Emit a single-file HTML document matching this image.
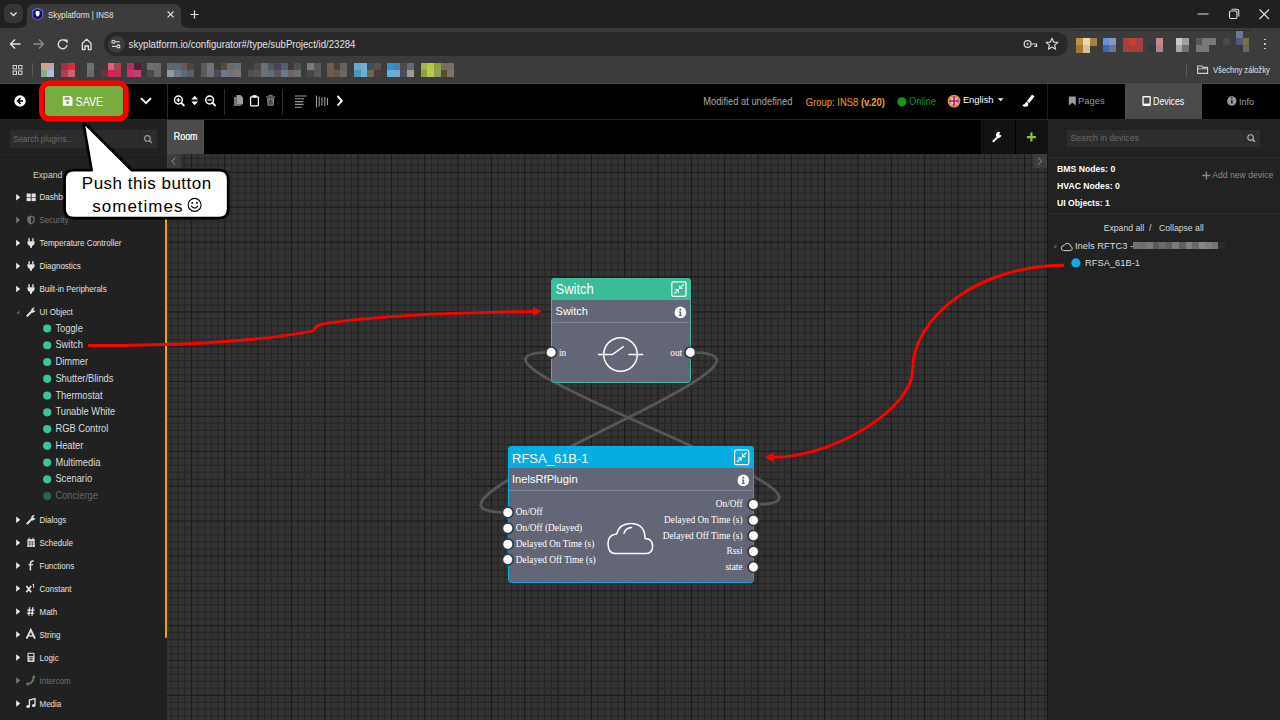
<!DOCTYPE html>
<html><head><meta charset="utf-8"><title>Skyplatform | INS8</title><style>
*{box-sizing:border-box;margin:0;padding:0}
html,body{width:1280px;height:720px;overflow:hidden;background:#000;font-family:"Liberation Sans",sans-serif}
.a{position:absolute}
.t{position:absolute;white-space:nowrap;line-height:1;transform-origin:0 0}
svg{position:absolute;left:0;top:0;overflow:visible}
</style></head><body>
<div class="a" style="left:0px;top:0px;width:1280px;height:28px;background:#202020"></div>
<div class="a" style="left:4px;top:4px;width:19px;height:19px;background:#353535;border-radius:6px"></div>
<svg width="1" height="1"><path d="M10.4 12.6 L13.5 15.5 L16.6 12.6" stroke="#e0e0e0" stroke-width="1.4" fill="none"/></svg>
<svg width="1" height="1"><path d="M19 28 Q27 28 27 20 V12 Q27 4 35 4 H173 Q181 4 181 12 V20 Q181 28 189 28 Z" fill="#3c3c3c"/></svg>
<svg width="1" height="1"><defs><linearGradient id="hg" x1="0" y1="0" x2="0" y2="1"><stop offset="0" stop-color="#3a7be0"/><stop offset="1" stop-color="#8a3ad0"/></linearGradient></defs><path d="M37.6 8.2 L42.6 11 L42.6 17.2 L37.6 20 L32.6 17.2 L32.6 11 Z" fill="#14143a" stroke="url(#hg)" stroke-width="1.3"/><path d="M35.6 11.6 L37.6 10.8 L39.6 11.6 L39.6 14 Q39.6 15.8 37.6 16.8 Q35.6 15.8 35.6 14 Z" fill="#f4f4ff"/></svg>
<div class="t" style="left:47.8px;top:10.83px;font-size:9.6px;color:#e3e3e3;font-weight:400;font-family:'Liberation Sans';transform:scale(0.82,0.931);">Skyplatform | INS8</div>
<svg width="1" height="1"><path d="M167.6 11.4 L173.6 17.4 M173.6 11.4 L167.6 17.4" stroke="#e6e6e6" stroke-width="1.15"/></svg>
<svg width="1" height="1"><path d="M194.5 10.5 V18.5 M190.5 14.5 H198.5" stroke="#e6e6e6" stroke-width="1.2"/></svg>
<svg width="1" height="1"><path d="M1197.5 14 H1208.5" stroke="#e0e0e0" stroke-width="1"/></svg>
<svg width="1" height="1"><rect x="1229.5" y="11" width="7.5" height="7.5" rx="1.5" fill="none" stroke="#e0e0e0" stroke-width="1.1"/><path d="M1231.6 9.2 H1236.6 Q1238.8 9.2 1238.8 11.4 V16.4" fill="none" stroke="#e0e0e0" stroke-width="1.1"/></svg>
<svg width="1" height="1"><path d="M1259.5 9.5 L1269 19 M1269 9.5 L1259.5 19" stroke="#e0e0e0" stroke-width="1.1"/></svg>
<div class="a" style="left:0px;top:28px;width:1280px;height:56px;background:#3c3c3c"></div>
<svg width="1" height="1"><path d="M20.5 44 H10.5 M15 39.5 L10.5 44 L15 48.5" stroke="#e3e3e3" stroke-width="1.4" fill="none"/></svg>
<svg width="1" height="1"><path d="M33.5 44 H43.5 M39 39.5 L43.5 44 L39 48.5" stroke="#8a8a8a" stroke-width="1.4" fill="none"/></svg>
<svg width="1" height="1"><path d="M67 45 A4.4 4.4 0 1 1 65.6 41" stroke="#e3e3e3" stroke-width="1.4" fill="none"/><path d="M63.6 39.4 L67.6 39.4 L67.6 43.4 Z" fill="#e3e3e3"/></svg>
<svg width="1" height="1"><path d="M82.4 49.6 V43.2 L86.7 39.2 L91 43.2 V49.6 H88.4 V46 H85 V49.6 Z" stroke="#e3e3e3" stroke-width="1.3" fill="none" stroke-linejoin="round"/></svg>
<div class="a" style="left:104px;top:32px;width:964px;height:24px;background:#282828;border-radius:12px"></div>
<div class="a" style="left:107.5px;top:35.5px;width:17px;height:17px;background:#3c3c3c;border-radius:50%"></div>
<svg width="1" height="1"><circle cx="113.4" cy="41.8" r="1.5" fill="none" stroke="#e3e3e3" stroke-width="1.1"/><path d="M115.2 41.8 H119.6" stroke="#e3e3e3" stroke-width="1.1"/><circle cx="118.4" cy="46.4" r="1.5" fill="none" stroke="#e3e3e3" stroke-width="1.1"/><path d="M112 46.4 H116.6" stroke="#e3e3e3" stroke-width="1.1"/></svg>
<div class="t" style="left:128.6px;top:38.53px;font-size:9.63px;color:#e3e3e3;font-weight:400;font-family:'Liberation Sans';transform:scale(1,1.088);">skyplatform.io/configurator#/type/subProject/id/23284</div>
<svg width="1" height="1"><circle cx="1027.6" cy="44" r="3.4" fill="none" stroke="#d8d8d8" stroke-width="1.2"/><circle cx="1027.6" cy="44" r="1" fill="#d8d8d8"/><path d="M1031 44 H1036.6 V46.4 H1034.2" stroke="#d8d8d8" stroke-width="1.2" fill="none"/></svg>
<svg width="1" height="1"><path d="M1052 38.2 L1053.7 42.2 L1057.8 42.4 L1054.6 45.1 L1055.6 49.2 L1052 47 L1048.4 49.2 L1049.4 45.1 L1046.2 42.4 L1050.3 42.2 Z" fill="none" stroke="#d8d8d8" stroke-width="1.2" stroke-linejoin="round"/></svg>
<div class="a" style="left:1076px;top:38px;width:7.1px;height:7.5px;background:#c09040"></div>
<div class="a" style="left:1082.8px;top:38px;width:7.1px;height:7.5px;background:#f0d8a8"></div>
<div class="a" style="left:1089.6px;top:38px;width:7.1px;height:7.5px;background:#a88040"></div>
<div class="a" style="left:1076px;top:45.2px;width:7.1px;height:7.5px;background:#a07838"></div>
<div class="a" style="left:1082.8px;top:45.2px;width:7.1px;height:7.5px;background:#d8c098"></div>
<div class="a" style="left:1073px;top:30.2px;width:179px;height:1px;background:#2e2e2e"></div>
<div class="a" style="left:1102.6px;top:38.1px;width:7px;height:7.3px;background:#6a90e0"></div>
<div class="a" style="left:1109.3px;top:38.1px;width:7px;height:7.3px;background:#8898b8"></div>
<div class="a" style="left:1102.6px;top:45.1px;width:7px;height:7.3px;background:#4068a8"></div>
<div class="a" style="left:1109.3px;top:45.1px;width:7px;height:7.3px;background:#687890"></div>
<div class="a" style="left:1122.7px;top:38.1px;width:6.97px;height:7.3px;background:#a84038"></div>
<div class="a" style="left:1129.37px;top:38.1px;width:6.97px;height:7.3px;background:#c84030"></div>
<div class="a" style="left:1136.04px;top:38.1px;width:6.97px;height:7.3px;background:#a84040"></div>
<div class="a" style="left:1122.7px;top:45.1px;width:6.97px;height:7.3px;background:#a04038"></div>
<div class="a" style="left:1129.37px;top:45.1px;width:6.97px;height:7.3px;background:#a84038"></div>
<div class="a" style="left:1136.04px;top:45.1px;width:6.97px;height:7.3px;background:#a04040"></div>
<div class="a" style="left:1149.4px;top:38.1px;width:6.95px;height:7.3px;background:#3a3a48"></div>
<div class="a" style="left:1156.05px;top:38.1px;width:6.95px;height:7.3px;background:#c88888"></div>
<div class="a" style="left:1149.4px;top:45.1px;width:6.95px;height:7.3px;background:#303848"></div>
<div class="a" style="left:1156.05px;top:45.1px;width:6.95px;height:7.3px;background:#a88888"></div>
<div class="a" style="left:1175.8px;top:38.1px;width:6.9px;height:7.3px;background:#c8c8c8"></div>
<div class="a" style="left:1182.4px;top:38.1px;width:6.9px;height:7.3px;background:#a0a0a0"></div>
<div class="a" style="left:1175.8px;top:45.1px;width:6.9px;height:7.3px;background:#a8a8a8"></div>
<div class="a" style="left:1182.4px;top:45.1px;width:6.9px;height:7.3px;background:#707070"></div>
<div class="a" style="left:1195.8px;top:38.1px;width:6.97px;height:7.3px;background:#585858"></div>
<div class="a" style="left:1202.47px;top:38.1px;width:6.97px;height:7.3px;background:#787878"></div>
<div class="a" style="left:1209.14px;top:38.1px;width:6.97px;height:7.3px;background:#787878"></div>
<div class="a" style="left:1195.8px;top:45.1px;width:6.97px;height:7.3px;background:#787878"></div>
<div class="a" style="left:1202.47px;top:45.1px;width:6.97px;height:7.3px;background:#787878"></div>
<div class="a" style="left:1222.5px;top:38.1px;width:7px;height:7.3px;background:#484848"></div>
<div class="a" style="left:1235.9px;top:31.2px;width:6.95px;height:7.23px;background:#6a7890"></div>
<div class="a" style="left:1235.9px;top:38.13px;width:6.95px;height:7.23px;background:#505a78"></div>
<div class="a" style="left:1242.55px;top:38.13px;width:6.95px;height:7.23px;background:#7a7048"></div>
<div class="a" style="left:1235.9px;top:45.06px;width:6.95px;height:7.23px;background:#3a3840"></div>
<div class="a" style="left:1242.55px;top:45.06px;width:6.95px;height:7.23px;background:#706458"></div>
<div class="a" style="left:1263.8px;top:38.6px;width:1.8px;height:1.8px;background:#e3e3e3;border-radius:50%"></div>
<div class="a" style="left:1263.8px;top:43.1px;width:1.8px;height:1.8px;background:#e3e3e3;border-radius:50%"></div>
<div class="a" style="left:1263.8px;top:47.6px;width:1.8px;height:1.8px;background:#e3e3e3;border-radius:50%"></div>
<svg width="1" height="1"><g fill="none" stroke="#d8d8d8" stroke-width="1"><rect x="13.1" y="65.5" width="3.4" height="3.4"/><rect x="18.6" y="65.5" width="3.4" height="3.4"/><rect x="13.1" y="71" width="3.4" height="3.4"/><rect x="18.6" y="71" width="3.4" height="3.4"/></g></svg>
<div class="a" style="left:32.3px;top:63px;width:1px;height:14px;background:#5a5a5a"></div>
<div class="a" style="left:40.6px;top:63px;width:7px;height:7.3px;background:#c8a882"></div>
<div class="a" style="left:47.3px;top:63px;width:7px;height:7.3px;background:#c8a0b0"></div>
<div class="a" style="left:40.6px;top:70px;width:7px;height:7.3px;background:#90a890"></div>
<div class="a" style="left:47.3px;top:70px;width:7px;height:7.3px;background:#a8c0d8"></div>
<div class="a" style="left:60.6px;top:63px;width:7.3px;height:7.3px;background:#a03040"></div>
<div class="a" style="left:67.6px;top:63px;width:7.3px;height:7.3px;background:#d03040"></div>
<div class="a" style="left:74.6px;top:63px;width:7.3px;height:7.3px;background:#503038"></div>
<div class="a" style="left:60.6px;top:70px;width:7.3px;height:7.3px;background:#b04050"></div>
<div class="a" style="left:67.6px;top:70px;width:7.3px;height:7.3px;background:#d06070"></div>
<div class="a" style="left:87px;top:63px;width:7.3px;height:7.3px;background:#707070"></div>
<div class="a" style="left:87px;top:70px;width:7.3px;height:7.3px;background:#6a6a6a"></div>
<div class="a" style="left:101px;top:63px;width:7px;height:7.3px;background:#553038"></div>
<div class="a" style="left:107.7px;top:63px;width:7px;height:7.3px;background:#e06080"></div>
<div class="a" style="left:114.4px;top:63px;width:7px;height:7.3px;background:#b04050"></div>
<div class="a" style="left:101px;top:70px;width:7px;height:7.3px;background:#603840"></div>
<div class="a" style="left:107.7px;top:70px;width:7px;height:7.3px;background:#d02850"></div>
<div class="a" style="left:114.4px;top:70px;width:7px;height:7.3px;background:#c03050"></div>
<div class="a" style="left:127px;top:63px;width:7.3px;height:7.3px;background:#b03060"></div>
<div class="a" style="left:134px;top:63px;width:7.3px;height:7.3px;background:#502030"></div>
<div class="a" style="left:127px;top:70px;width:7.3px;height:7.3px;background:#d03070"></div>
<div class="a" style="left:134px;top:70px;width:7.3px;height:7.3px;background:#c04070"></div>
<div class="a" style="left:147px;top:63px;width:7.3px;height:7.3px;background:#707070"></div>
<div class="a" style="left:154px;top:63px;width:7.3px;height:7.3px;background:#6a6a6a"></div>
<div class="a" style="left:147px;top:70px;width:7.3px;height:7.3px;background:#4a4a4a"></div>
<div class="a" style="left:154px;top:70px;width:7.3px;height:7.3px;background:#686868"></div>
<div class="a" style="left:167px;top:63px;width:7.1px;height:7.3px;background:#6a625e"></div>
<div class="a" style="left:173.8px;top:63px;width:7.1px;height:7.3px;background:#586878"></div>
<div class="a" style="left:180.6px;top:63px;width:7.1px;height:7.3px;background:#6a5a52"></div>
<div class="a" style="left:187.4px;top:63px;width:7.1px;height:7.3px;background:#4a443e"></div>
<div class="a" style="left:167px;top:70px;width:7.1px;height:7.3px;background:#909aa0"></div>
<div class="a" style="left:173.8px;top:70px;width:7.1px;height:7.3px;background:#6a7a84"></div>
<div class="a" style="left:180.6px;top:70px;width:7.1px;height:7.3px;background:#5e6a74"></div>
<div class="a" style="left:187.4px;top:70px;width:7.1px;height:7.3px;background:#585e6a"></div>
<div class="a" style="left:200.6px;top:63px;width:7px;height:7.3px;background:#5a5a5a"></div>
<div class="a" style="left:207.3px;top:63px;width:7px;height:7.3px;background:#727272"></div>
<div class="a" style="left:220.7px;top:63px;width:7px;height:7.3px;background:#5a4a3a"></div>
<div class="a" style="left:227.4px;top:63px;width:7px;height:7.3px;background:#6a6a6a"></div>
<div class="a" style="left:234.1px;top:63px;width:7px;height:7.3px;background:#6a7074"></div>
<div class="a" style="left:200.6px;top:70px;width:7px;height:7.3px;background:#5a5a5a"></div>
<div class="a" style="left:207.3px;top:70px;width:7px;height:7.3px;background:#727272"></div>
<div class="a" style="left:214px;top:70px;width:7px;height:7.3px;background:#484c58"></div>
<div class="a" style="left:220.7px;top:70px;width:7px;height:7.3px;background:#6a7a88"></div>
<div class="a" style="left:227.4px;top:70px;width:7px;height:7.3px;background:#74707a"></div>
<div class="a" style="left:234.1px;top:70px;width:7px;height:7.3px;background:#7a7474"></div>
<div class="a" style="left:254.2px;top:63px;width:7px;height:7.3px;background:#4a4a4a"></div>
<div class="a" style="left:260.9px;top:63px;width:7px;height:7.3px;background:#707070"></div>
<div class="a" style="left:267.6px;top:63px;width:7px;height:7.3px;background:#585450"></div>
<div class="a" style="left:274.3px;top:63px;width:7px;height:7.3px;background:#4a4460"></div>
<div class="a" style="left:281px;top:63px;width:7px;height:7.3px;background:#4e6070"></div>
<div class="a" style="left:294.4px;top:63px;width:7px;height:7.3px;background:#505050"></div>
<div class="a" style="left:247.5px;top:70px;width:7px;height:7.3px;background:#505050"></div>
<div class="a" style="left:254.2px;top:70px;width:7px;height:7.3px;background:#555555"></div>
<div class="a" style="left:260.9px;top:70px;width:7px;height:7.3px;background:#707070"></div>
<div class="a" style="left:267.6px;top:70px;width:7px;height:7.3px;background:#5a6e80"></div>
<div class="a" style="left:274.3px;top:70px;width:7px;height:7.3px;background:#605458"></div>
<div class="a" style="left:281px;top:70px;width:7px;height:7.3px;background:#6a7a88"></div>
<div class="a" style="left:287.7px;top:70px;width:7px;height:7.3px;background:#6e6660"></div>
<div class="a" style="left:294.4px;top:70px;width:7px;height:7.3px;background:#687070"></div>
<div class="a" style="left:307px;top:63px;width:7.1px;height:7.3px;background:#7a7a7a"></div>
<div class="a" style="left:313.8px;top:63px;width:7.1px;height:7.3px;background:#5a5a5a"></div>
<div class="a" style="left:307px;top:70px;width:7.1px;height:7.3px;background:#484848"></div>
<div class="a" style="left:313.8px;top:70px;width:7.1px;height:7.3px;background:#5a5a5a"></div>
<div class="a" style="left:327px;top:63px;width:7px;height:7.3px;background:#6e5c48"></div>
<div class="a" style="left:333.7px;top:63px;width:7px;height:7.3px;background:#4e4038"></div>
<div class="a" style="left:340.4px;top:63px;width:7px;height:7.3px;background:#6a6060"></div>
<div class="a" style="left:327px;top:70px;width:7px;height:7.3px;background:#705a48"></div>
<div class="a" style="left:333.7px;top:70px;width:7px;height:7.3px;background:#5e5a48"></div>
<div class="a" style="left:340.4px;top:70px;width:7px;height:7.3px;background:#6e6464"></div>
<div class="a" style="left:354px;top:63px;width:7px;height:7.3px;background:#68a8c8"></div>
<div class="a" style="left:360.7px;top:63px;width:7px;height:7.3px;background:#70b0d0"></div>
<div class="a" style="left:367.4px;top:63px;width:7px;height:7.3px;background:#3a5060"></div>
<div class="a" style="left:374.1px;top:63px;width:7px;height:7.3px;background:#5a5048"></div>
<div class="a" style="left:354px;top:70px;width:7px;height:7.3px;background:#4898b8"></div>
<div class="a" style="left:360.7px;top:70px;width:7px;height:7.3px;background:#68b0d0"></div>
<div class="a" style="left:367.4px;top:70px;width:7px;height:7.3px;background:#686850"></div>
<div class="a" style="left:374.1px;top:70px;width:7px;height:7.3px;background:#4a3a38"></div>
<div class="a" style="left:387px;top:63px;width:7px;height:7.3px;background:#2898c8"></div>
<div class="a" style="left:393.7px;top:63px;width:7px;height:7.3px;background:#3888b0"></div>
<div class="a" style="left:400.4px;top:63px;width:7px;height:7.3px;background:#504844"></div>
<div class="a" style="left:407.1px;top:63px;width:7px;height:7.3px;background:#606a70"></div>
<div class="a" style="left:387px;top:70px;width:7px;height:7.3px;background:#60b0d8"></div>
<div class="a" style="left:393.7px;top:70px;width:7px;height:7.3px;background:#78a8c8"></div>
<div class="a" style="left:400.4px;top:70px;width:7px;height:7.3px;background:#485060"></div>
<div class="a" style="left:407.1px;top:70px;width:7px;height:7.3px;background:#a09a90"></div>
<div class="a" style="left:420.5px;top:63px;width:7px;height:7.3px;background:#a8b048"></div>
<div class="a" style="left:427.2px;top:63px;width:7px;height:7.3px;background:#b8c848"></div>
<div class="a" style="left:433.9px;top:63px;width:7px;height:7.3px;background:#90a040"></div>
<div class="a" style="left:440.6px;top:63px;width:7px;height:7.3px;background:#7a6e60"></div>
<div class="a" style="left:447.3px;top:63px;width:7px;height:7.3px;background:#7a6e60"></div>
<div class="a" style="left:420.5px;top:70px;width:7px;height:7.3px;background:#90a040"></div>
<div class="a" style="left:427.2px;top:70px;width:7px;height:7.3px;background:#b8c848"></div>
<div class="a" style="left:433.9px;top:70px;width:7px;height:7.3px;background:#90a060"></div>
<div class="a" style="left:440.6px;top:70px;width:7px;height:7.3px;background:#5a4a38"></div>
<div class="a" style="left:447.3px;top:70px;width:7px;height:7.3px;background:#807468"></div>
<div class="a" style="left:1186px;top:63px;width:1px;height:14px;background:#5a5a5a"></div>
<svg width="1" height="1"><path d="M1197.6 66 H1201.6 L1203 67.4 H1207.6 V73.4 H1197.6 Z" fill="none" stroke="#d0d0d0" stroke-width="1.1" stroke-linejoin="round"/><path d="M1197.6 68.8 H1207.6" stroke="#d0d0d0" stroke-width="0.9"/></svg>
<div class="t" style="left:1213.2px;top:64.82px;font-size:8.4px;color:#e3e3e3;font-weight:400;font-family:'Liberation Sans';transform:scale(0.91,1.164);">Všechny záložky</div>
<div class="a" style="left:0px;top:83px;width:1280px;height:1px;background:#474747"></div>
<div class="a" style="left:0px;top:84px;width:1280px;height:35px;background:#000"></div>
<div class="a" style="left:0px;top:119px;width:1280px;height:1px;background:#262626"></div>
<svg width="1" height="1"><circle cx="20" cy="101" r="5.7" fill="#fff"/><path d="M20.6 98 L17.6 101 L20.6 104 M17.8 101 H23" stroke="#000" stroke-width="1.7" fill="none"/></svg>
<div class="a" style="left:45px;top:86px;width:78px;height:30px;background:#79ac3f;border-radius:3px"></div>
<svg width="1" height="1"><path d="M62.8 96.1 H70.4 L72.5 98.2 V105.8 H62.8 Z" fill="#fff"/><rect x="64.6" y="97.2" width="5" height="2.6" fill="#79ac3f"/><circle cx="67.6" cy="102.6" r="1.5" fill="#79ac3f"/></svg>
<div class="t" style="left:75.6px;top:95.9px;font-size:10.67px;color:#fff;font-weight:400;font-family:'Liberation Sans';transform:scale(1,1.152);">SAVE</div>
<svg width="1" height="1"><path d="M141 98.2 L146 103.2 L151 98.2" stroke="#fff" stroke-width="1.9" fill="none"/></svg>
<div class="a" style="left:167px;top:84px;width:1px;height:35px;background:#2a2a2a"></div>
<svg width="1" height="1"><circle cx="178.4" cy="100" r="3.9" fill="#000" stroke="#fff" stroke-width="1.5"/><path d="M176.4 100 H180.4" stroke="#fff" stroke-width="1.2"/><path d="M178.4 98 V102" stroke="#fff" stroke-width="1.2"/><path d="M181.3 102.9 L183.8 105.4" stroke="#fff" stroke-width="2" stroke-linecap="round"/></svg>
<svg width="1" height="1"><path d="M191.3 99.4 L194.7 95.8 L198.1 99.4 Z M191.3 101.6 L194.7 105.2 L198.1 101.6 Z" fill="#fff"/></svg>
<svg width="1" height="1"><circle cx="209.6" cy="100" r="3.9" fill="#000" stroke="#fff" stroke-width="1.5"/><path d="M207.6 100 H211.6" stroke="#fff" stroke-width="1.2"/><path d="M212.5 102.9 L215.0 105.4" stroke="#fff" stroke-width="2" stroke-linecap="round"/></svg>
<div class="a" style="left:223.5px;top:89px;width:1px;height:26px;background:#2e2e2e"></div>
<svg width="1" height="1"><path d="M234 97 H236.5 V104.5 H241 V106 H234 Z" fill="#777"/><path d="M236.5 95 H240.5 L243 97.5 V104.5 H236.5 Z" fill="#9a9a9a"/></svg>
<svg width="1" height="1"><rect x="250.6" y="96.8" width="7.8" height="9" rx="0.8" fill="none" stroke="#fff" stroke-width="1.3"/><rect x="252.5" y="95.2" width="4" height="2.4" fill="#fff"/></svg>
<svg width="1" height="1"><path d="M266 97 H275.2" stroke="#888" stroke-width="1.2"/><path d="M269 96.6 V95.3 H272.2 V96.6" stroke="#888" stroke-width="1" fill="none"/><path d="M267 98.2 H274.2 L273.6 105.8 H267.6 Z" fill="#888"/><path d="M269.2 99.5 V104.8 M270.6 99.5 V104.8 M272 99.5 V104.8" stroke="#000" stroke-width="0.6"/></svg>
<div class="a" style="left:282px;top:89px;width:1px;height:26px;background:#2e2e2e"></div>
<svg width="1" height="1"><path d="M295 96 H306.5 M295 98.8 H304 M295 101.6 H303 M295 104.4 H303.5 M295 107.2 H302" stroke="#9a9a9a" stroke-width="1.1"/></svg>
<svg width="1" height="1"><path d="M316.5 95.5 V107.5 M319.2 96.5 V106.5 M322 97.5 V105.5 M324.8 97 V106 M327.5 98 V105" stroke="#9a9a9a" stroke-width="1.1"/></svg>
<svg width="1" height="1"><path d="M337.5 96 L341.8 100.8 L337.5 105.6" stroke="#fff" stroke-width="1.9" fill="none"/></svg>
<div class="t" style="left:703.2px;top:97.3px;font-size:9.33px;color:#a9a9a9;font-weight:400;font-family:'Liberation Sans';transform:scale(1,1.153);">Modified at undefined</div>
<div class="t" style="left:805.8px;top:97.1px;font-size:9.45px;color:#f0a020;font-weight:400;font-family:'Liberation Sans';transform:scale(1,1.138);">Group: INS8 <b>(v.20)</b></div>
<svg width="1" height="1"><circle cx="901.9" cy="101.8" r="4.6" fill="#169616"/></svg>
<div class="t" style="left:909px;top:97.3px;font-size:9.33px;color:#1a8f1a;font-weight:400;font-family:'Liberation Sans';transform:scale(1,1.153);">Online</div>
<svg width="1" height="1"><defs><clipPath id="fc"><circle cx="954" cy="101.1" r="5.6"/></clipPath></defs><g clip-path="url(#fc)"><rect x="947" y="94" width="15" height="15" fill="#3a7ad2"/><path d="M947 94 L961 108.2 M961 94 L947 108.2" stroke="#f4f4f4" stroke-width="1.5"/><path d="M947 94 L961 108.2 M961 94 L947 108.2" stroke="#e03048" stroke-width="0.5"/><path d="M954 94 V109 M947 101.1 H962" stroke="#f4f4f4" stroke-width="2.7"/><path d="M954 94 V109 M947 101.1 H962" stroke="#e8153a" stroke-width="1.8"/></g><circle cx="954" cy="101.1" r="5.8" fill="none" stroke="#e89a20" stroke-width="1.2"/></svg>
<div class="t" style="left:962.9px;top:95.52px;font-size:9.33px;color:#fff;font-weight:400;font-family:'Liberation Sans';transform:scale(1,1.048);">English</div>
<svg width="1" height="1"><path d="M997.9 98.2 H1003.5 L1000.7 101.2 Z" fill="#fff"/></svg>
<svg width="1" height="1"><path d="M1031.4 95.2 Q1033 94.6 1034.4 96.4 L1029.4 103 L1026.8 101.4 Z" fill="#fff"/><path d="M1026.8 102 Q1028.9 103 1028.3 105.4 Q1027 107.2 1023.6 106.6 Q1022.4 106 1022.6 104.6 Q1024.5 104.8 1025 103.6 Q1025.5 101.8 1026.8 102 Z" fill="#fff"/></svg>
<div class="a" style="left:1047px;top:84px;width:1px;height:35px;background:#1c1c1c"></div>
<div class="a" style="left:1124.5px;top:84px;width:77px;height:35px;background:#4a4a4a"></div>
<svg width="1" height="1"><path d="M1068.8 96.6 H1075.8 V105.5 L1072.3 102.8 L1068.8 105.5 Z" fill="#9a9a9a"/></svg>
<div class="t" style="left:1078.1px;top:97.22px;font-size:9.33px;color:#9a9a9a;font-weight:400;font-family:'Liberation Sans';transform:scale(1,1.048);">Pages</div>
<svg width="1" height="1"><rect x="1142.4" y="96.1" width="8.4" height="9.8" rx="1.2" fill="#fff"/><rect x="1143.7" y="97.4" width="5.8" height="6.2" fill="#4a4a4a"/></svg>
<div class="t" style="left:1153.1px;top:96.85px;font-size:8.75px;color:#fff;font-weight:400;font-family:'Liberation Sans';transform:scale(1,1.181);">Devices</div>
<svg width="1" height="1"><circle cx="1231.8" cy="101" r="4.7" fill="#9a9a9a"/><rect x="1231.2" y="100" width="1.3" height="3.6" fill="#000"/><circle cx="1231.85" cy="98.3" r="0.8" fill="#000"/></svg>
<div class="t" style="left:1238.9px;top:96.92px;font-size:9.0px;color:#9a9a9a;font-weight:400;font-family:'Liberation Sans';transform:scale(1,1.086);">Info</div>
<div class="a" style="left:0px;top:120px;width:167px;height:600px;background:#212121"></div>
<div class="a" style="left:10px;top:130.4px;width:147px;height:17.5px;background:#2c2c2c"></div>
<div class="a" style="left:139px;top:130.4px;width:1px;height:17.5px;background:#252525"></div>
<svg width="1" height="1"><circle cx="147.4" cy="138.4" r="2.8" fill="none" stroke="#9a9a9a" stroke-width="1.1"/><path d="M149.4 140.4 L151.4 142.4" stroke="#9a9a9a" stroke-width="1.4" stroke-linecap="round"/></svg>
<div class="t" style="left:13.3px;top:134.83px;font-size:8px;color:#6a6a6a;font-weight:400;font-family:'Liberation Sans';transform:scale(1,1.117);">Search plugins...</div>
<div class="a" style="left:0px;top:157.4px;width:167px;height:1px;background:#1a1a1a"></div>
<div class="t" style="left:33px;top:170.36px;font-size:8.67px;color:#d0d0d0;font-weight:400;font-family:'Liberation Sans';transform:scale(1,1.095);">Expand all</div>
<div class="t" style="left:78.3px;top:170.36px;font-size:8.67px;color:#d0d0d0;font-weight:400;font-family:'Liberation Sans';transform:scale(1,1.095);">/</div>
<div class="t" style="left:88.3px;top:170.36px;font-size:8.67px;color:#d0d0d0;font-weight:400;font-family:'Liberation Sans';transform:scale(1,1.095);">Collapse all</div>
<svg width="1" height="1"><path d="M16.2 193.89999999999998 L20.2 197.2 L16.2 200.5 Z" fill="#f0f0f0"/></svg>
<svg width="1" height="1"><rect x="26.6" y="193.5" width="4.1" height="3.5" fill="#e2e2e2"/><rect x="31.6" y="193.5" width="4.1" height="3.5" fill="#e2e2e2"/><rect x="26.6" y="197.6" width="4.1" height="3.5" fill="#e2e2e2"/><rect x="31.6" y="197.6" width="4.1" height="3.5" fill="#e2e2e2"/></svg>
<div class="t" style="left:39.5px;top:193.34px;font-size:8px;color:#e2e2e2;font-weight:400;font-family:'Liberation Sans';transform:scale(1,1.205);">Dashboard</div>
<svg width="1" height="1"><path d="M16.2 216.7 L20.2 220.0 L16.2 223.3 Z" fill="#777"/></svg>
<svg width="1" height="1"><path d="M31 215.6 L34.8 217.0 V220.0 Q34.6 223.2 31 224.6 Q27.4 223.2 27.2 220.0 V217.0 Z" fill="#6e6e6e"/><path d="M31 217.0 V223.4 Q33.4 222.2 33.5 219.8 V217.9 Z" fill="#212121"/></svg>
<div class="t" style="left:39.5px;top:216.14px;font-size:8px;color:#727272;font-weight:400;font-family:'Liberation Sans';transform:scale(1,1.205);">Security</div>
<svg width="1" height="1"><path d="M16.2 239.7 L20.2 243.0 L16.2 246.3 Z" fill="#f0f0f0"/></svg>
<svg width="1" height="1"><rect x="28.4" y="238.2" width="1.4" height="3.2" fill="#e2e2e2"/><rect x="32.2" y="238.2" width="1.4" height="3.2" fill="#e2e2e2"/><path d="M27.4 241.2 H34.6 V243.0 Q34.3 245.6 32 245.9 V247.8 H30 V245.9 Q27.7 245.6 27.4 243.0 Z" fill="#e2e2e2"/></svg>
<div class="t" style="left:39.5px;top:239.14px;font-size:8px;color:#e2e2e2;font-weight:400;font-family:'Liberation Sans';transform:scale(1,1.205);">Temperature Controller</div>
<svg width="1" height="1"><path d="M16.2 262.7 L20.2 266.0 L16.2 269.3 Z" fill="#f0f0f0"/></svg>
<svg width="1" height="1"><rect x="28.4" y="261.2" width="1.4" height="3.2" fill="#e2e2e2"/><rect x="32.2" y="261.2" width="1.4" height="3.2" fill="#e2e2e2"/><path d="M27.4 264.2 H34.6 V266.0 Q34.3 268.6 32 268.9 V270.8 H30 V268.9 Q27.7 268.6 27.4 266.0 Z" fill="#e2e2e2"/></svg>
<div class="t" style="left:39.5px;top:262.14px;font-size:8px;color:#e2e2e2;font-weight:400;font-family:'Liberation Sans';transform:scale(1,1.205);">Diagnostics</div>
<svg width="1" height="1"><path d="M16.2 285.7 L20.2 289.0 L16.2 292.3 Z" fill="#f0f0f0"/></svg>
<svg width="1" height="1"><rect x="28.4" y="284.2" width="1.4" height="3.2" fill="#e2e2e2"/><rect x="32.2" y="284.2" width="1.4" height="3.2" fill="#e2e2e2"/><path d="M27.4 287.2 H34.6 V289.0 Q34.3 291.6 32 291.9 V293.8 H30 V291.9 Q27.7 291.6 27.4 289.0 Z" fill="#e2e2e2"/></svg>
<div class="t" style="left:39.5px;top:285.14px;font-size:8px;color:#e2e2e2;font-weight:400;font-family:'Liberation Sans';transform:scale(1,1.205);">Built-in Peripherals</div>
<svg width="1" height="1"><path d="M19.4 310.6 L19.4 313.8 L16.2 313.8 Z" fill="#666"/></svg>
<svg width="1" height="1"><path d="M27.4 315.8 L31.6 311.4" stroke="#e2e2e2" stroke-width="2.1" stroke-linecap="round"/><path d="M31.2 310.8 A2.9 2.9 0 0 1 34.8 307.5 L33.2 309.4 L33.8 310.8 L35.4 310.4 A2.9 2.9 0 0 1 31.6 312.6 Z" fill="#e2e2e2"/></svg>
<div class="t" style="left:39.5px;top:308.14px;font-size:8px;color:#e2e2e2;font-weight:400;font-family:'Liberation Sans';transform:scale(1,1.205);">UI Object</div>
<svg width="1" height="1"><circle cx="47.2" cy="328.50" r="4.1" fill="#3dc29b"/></svg>
<div class="t" style="left:55.4px;top:323.62px;font-size:9.33px;color:#dcdcdc;font-weight:400;font-family:'Liberation Sans';transform:scale(1,1.093);">Toggle</div>
<svg width="1" height="1"><circle cx="47.2" cy="345.26" r="4.1" fill="#3dc29b"/></svg>
<div class="t" style="left:55.4px;top:340.38px;font-size:9.33px;color:#dcdcdc;font-weight:400;font-family:'Liberation Sans';transform:scale(1,1.093);">Switch</div>
<svg width="1" height="1"><circle cx="47.2" cy="362.02" r="4.1" fill="#3dc29b"/></svg>
<div class="t" style="left:55.4px;top:357.14px;font-size:9.33px;color:#dcdcdc;font-weight:400;font-family:'Liberation Sans';transform:scale(1,1.093);">Dimmer</div>
<svg width="1" height="1"><circle cx="47.2" cy="378.78" r="4.1" fill="#3dc29b"/></svg>
<div class="t" style="left:55.4px;top:373.9px;font-size:9.33px;color:#dcdcdc;font-weight:400;font-family:'Liberation Sans';transform:scale(1,1.093);">Shutter/Blinds</div>
<svg width="1" height="1"><circle cx="47.2" cy="395.54" r="4.1" fill="#3dc29b"/></svg>
<div class="t" style="left:55.4px;top:390.66px;font-size:9.33px;color:#dcdcdc;font-weight:400;font-family:'Liberation Sans';transform:scale(1,1.093);">Thermostat</div>
<svg width="1" height="1"><circle cx="47.2" cy="412.30" r="4.1" fill="#3dc29b"/></svg>
<div class="t" style="left:55.4px;top:407.42px;font-size:9.33px;color:#dcdcdc;font-weight:400;font-family:'Liberation Sans';transform:scale(1,1.093);">Tunable White</div>
<svg width="1" height="1"><circle cx="47.2" cy="429.06" r="4.1" fill="#3dc29b"/></svg>
<div class="t" style="left:55.4px;top:424.18px;font-size:9.33px;color:#dcdcdc;font-weight:400;font-family:'Liberation Sans';transform:scale(1,1.093);">RGB Control</div>
<svg width="1" height="1"><circle cx="47.2" cy="445.82" r="4.1" fill="#3dc29b"/></svg>
<div class="t" style="left:55.4px;top:440.94px;font-size:9.33px;color:#dcdcdc;font-weight:400;font-family:'Liberation Sans';transform:scale(1,1.093);">Heater</div>
<svg width="1" height="1"><circle cx="47.2" cy="462.58" r="4.1" fill="#3dc29b"/></svg>
<div class="t" style="left:55.4px;top:457.7px;font-size:9.33px;color:#dcdcdc;font-weight:400;font-family:'Liberation Sans';transform:scale(1,1.093);">Multimedia</div>
<svg width="1" height="1"><circle cx="47.2" cy="479.34" r="4.1" fill="#3dc29b"/></svg>
<div class="t" style="left:55.4px;top:474.46px;font-size:9.33px;color:#dcdcdc;font-weight:400;font-family:'Liberation Sans';transform:scale(1,1.093);">Scenario</div>
<svg width="1" height="1"><circle cx="47.2" cy="496.10" r="4.1" fill="#2d6354"/></svg>
<div class="t" style="left:55.4px;top:491.22px;font-size:9.33px;color:#676767;font-weight:400;font-family:'Liberation Sans';transform:scale(1,1.093);">Concierge</div>
<svg width="1" height="1"><path d="M16.2 516.4000000000001 L20.2 519.7 L16.2 523.0 Z" fill="#f0f0f0"/></svg>
<svg width="1" height="1"><path d="M27.4 523.5 L31.6 519.1" stroke="#e2e2e2" stroke-width="2.1" stroke-linecap="round"/><path d="M31.2 518.5 A2.9 2.9 0 0 1 34.8 515.2 L33.2 517.1 L33.8 518.5 L35.4 518.1 A2.9 2.9 0 0 1 31.6 520.3000000000001 Z" fill="#e2e2e2"/></svg>
<div class="t" style="left:39.5px;top:515.84px;font-size:8px;color:#e2e2e2;font-weight:400;font-family:'Liberation Sans';transform:scale(1,1.205);">Dialogs</div>
<svg width="1" height="1"><path d="M16.2 539.4000000000001 L20.2 542.7 L16.2 546.0 Z" fill="#f0f0f0"/></svg>
<svg width="1" height="1"><rect x="27.3" y="539.3000000000001" width="7.6" height="7.8" rx="0.6" fill="#e2e2e2"/><rect x="28.6" y="537.8000000000001" width="1.1" height="2.2" fill="#e2e2e2"/><rect x="32.5" y="537.8000000000001" width="1.1" height="2.2" fill="#e2e2e2"/><path d="M27.3 541.8000000000001 H34.9 M27.3 544.1 H34.9 M29.8 541.3000000000001 V547.1 M32.3 541.3000000000001 V547.1" stroke="#212121" stroke-width="0.55"/></svg>
<div class="t" style="left:39.5px;top:538.84px;font-size:8px;color:#e2e2e2;font-weight:400;font-family:'Liberation Sans';transform:scale(1,1.205);">Schedule</div>
<svg width="1" height="1"><path d="M16.2 562.3000000000001 L20.2 565.6 L16.2 568.9 Z" fill="#f0f0f0"/></svg>
<svg width="1" height="1"><path d="M33.6 561.2 Q32.2 560.6 31.2 561.6 Q30.4 562.4 30.4 564.0 V570.6" stroke="#e2e2e2" stroke-width="1.5" fill="none"/><path d="M28.6 564.6 H33" stroke="#e2e2e2" stroke-width="1.3"/></svg>
<div class="t" style="left:39.5px;top:561.74px;font-size:8px;color:#e2e2e2;font-weight:400;font-family:'Liberation Sans';transform:scale(1,1.205);">Functions</div>
<svg width="1" height="1"><path d="M16.2 585.2 L20.2 588.5 L16.2 591.8 Z" fill="#f0f0f0"/></svg>
<svg width="1" height="1"><path d="M26.4 585.9 L31.2 592.3 M31.2 585.9 L26.4 592.3" stroke="#e2e2e2" stroke-width="1.7"/><path d="M32.6 584.9 L33.6 583.9 V587.9" stroke="#e2e2e2" stroke-width="1" fill="none"/></svg>
<div class="t" style="left:39.5px;top:584.64px;font-size:8px;color:#e2e2e2;font-weight:400;font-family:'Liberation Sans';transform:scale(1,1.205);">Constant</div>
<svg width="1" height="1"><path d="M16.2 608.2 L20.2 611.5 L16.2 614.8 Z" fill="#f0f0f0"/></svg>
<svg width="1" height="1"><path d="M29.6 607.3 L28.8 615.7 M32.8 607.3 L32 615.7 M27.2 610.1 H34.6 M26.8 613.1 H34.2" stroke="#e2e2e2" stroke-width="1.3"/></svg>
<div class="t" style="left:39.5px;top:607.64px;font-size:8px;color:#e2e2e2;font-weight:400;font-family:'Liberation Sans';transform:scale(1,1.205);">Math</div>
<svg width="1" height="1"><path d="M16.2 631.2 L20.2 634.5 L16.2 637.8 Z" fill="#f0f0f0"/></svg>
<svg width="1" height="1"><path d="M26.6 638.7 L30.8 629.9 L35 638.7" stroke="#e2e2e2" stroke-width="1.9" fill="none"/><path d="M28.8 635.9 H32.9" stroke="#e2e2e2" stroke-width="1.3"/></svg>
<div class="t" style="left:39.5px;top:630.64px;font-size:8px;color:#e2e2e2;font-weight:400;font-family:'Liberation Sans';transform:scale(1,1.205);">String</div>
<svg width="1" height="1"><path d="M16.2 654.2 L20.2 657.5 L16.2 660.8 Z" fill="#f0f0f0"/></svg>
<svg width="1" height="1"><rect x="27.5" y="652.7" width="7" height="9.4" rx="1" fill="#e2e2e2"/><rect x="28.6" y="653.8" width="4.8" height="2.2" fill="#212121"/><path d="M28.6 657.3 H33.4 M28.6 659.5 H33.4 M30.2 656.7 V661.4 M31.8 656.7 V661.4" stroke="#212121" stroke-width="0.6"/></svg>
<div class="t" style="left:39.5px;top:653.64px;font-size:8px;color:#e2e2e2;font-weight:400;font-family:'Liberation Sans';transform:scale(1,1.205);">Logic</div>
<svg width="1" height="1"><path d="M16.2 677.2 L20.2 680.5 L16.2 683.8 Z" fill="#777"/></svg>
<svg width="1" height="1"><path d="M33.6 676.7 Q33.6 683.1 27.6 684.1" stroke="#6e6e6e" stroke-width="1.9" fill="none" stroke-linecap="round"/><rect x="32.6" y="675.6" width="2.6" height="2.8" rx="0.6" fill="#6e6e6e" transform="rotate(10 33.9 677.0)"/><rect x="26.2" y="682.7" width="2.8" height="2.6" rx="0.6" fill="#6e6e6e" transform="rotate(10 27.6 684.0)"/></svg>
<div class="t" style="left:39.5px;top:676.64px;font-size:8px;color:#727272;font-weight:400;font-family:'Liberation Sans';transform:scale(1,1.205);">Intercom</div>
<svg width="1" height="1"><path d="M16.2 700.2 L20.2 703.5 L16.2 706.8 Z" fill="#f0f0f0"/></svg>
<svg width="1" height="1"><path d="M29.4 706.3 V700.1 L35 698.7 V705.3" stroke="#e2e2e2" stroke-width="1.3" fill="none"/><ellipse cx="28.1" cy="706.5" rx="1.8" ry="1.5" fill="#e2e2e2"/><ellipse cx="33.7" cy="705.5" rx="1.8" ry="1.5" fill="#e2e2e2"/></svg>
<div class="t" style="left:39.5px;top:699.64px;font-size:8px;color:#e2e2e2;font-weight:400;font-family:'Liberation Sans';transform:scale(1,1.205);">Media</div>
<div class="a" style="left:164.6px;top:175px;width:2.8px;height:463px;background:#f0a500;border-radius:1.4px"></div>
<div class="a" style="left:167px;top:120px;width:880px;height:34px;background:#000"></div>
<div class="a" style="left:167px;top:120px;width:37.2px;height:34px;background:#4b4b4b"></div>
<div class="t" style="left:173.8px;top:132.25px;font-size:8.9px;color:#f0f0f0;font-weight:400;font-family:'Liberation Sans';transform:scale(1,1.161);text-shadow:0 0 0.4px #fff">Room</div>
<div class="a" style="left:981px;top:120px;width:34px;height:34px;background:#121212"></div>
<div class="a" style="left:1015.5px;top:120px;width:31.5px;height:34px;background:#121212"></div>
<svg width="1" height="1"><path d="M993.4 141.3 L997.8 136.9" stroke="#fff" stroke-width="2" stroke-linecap="round"/><path d="M997.4 137.3 A2.6 2.6 0 0 1 1000.4 132.4 L999.2 134 L999.8 135.3 L1001.3 135 A2.6 2.6 0 0 1 997.8 137.7 Z" fill="#fff"/></svg>
<svg width="1" height="1"><path d="M1031.4 132.6 V141.6 M1026.9 137.1 H1035.9" stroke="#8cc43c" stroke-width="2.2"/></svg>
<div class="a" style="left:167px;top:154px;width:880px;height:566px;background:#333"></div>
<svg width="1" height="1" style="overflow:visible"><path d="M171.45 154V720 M178.12 154V720 M184.78 154V720 M198.12 154V720 M204.78 154V720 M211.45 154V720 M218.11 154V720 M231.44 154V720 M238.11 154V720 M244.77 154V720 M251.44 154V720 M264.77 154V720 M271.43 154V720 M278.10 154V720 M284.77 154V720 M298.10 154V720 M304.76 154V720 M311.43 154V720 M318.09 154V720 M331.42 154V720 M338.09 154V720 M344.75 154V720 M351.42 154V720 M364.75 154V720 M371.42 154V720 M378.08 154V720 M384.75 154V720 M398.08 154V720 M404.74 154V720 M411.41 154V720 M418.07 154V720 M431.40 154V720 M438.07 154V720 M444.74 154V720 M451.40 154V720 M464.73 154V720 M471.40 154V720 M478.06 154V720 M484.73 154V720 M498.06 154V720 M504.72 154V720 M511.39 154V720 M518.05 154V720 M531.39 154V720 M538.05 154V720 M544.72 154V720 M551.38 154V720 M564.71 154V720 M571.38 154V720 M578.04 154V720 M584.71 154V720 M598.04 154V720 M604.70 154V720 M611.37 154V720 M618.04 154V720 M631.37 154V720 M638.03 154V720 M644.70 154V720 M651.36 154V720 M664.69 154V720 M671.36 154V720 M678.02 154V720 M684.69 154V720 M698.02 154V720 M704.69 154V720 M711.35 154V720 M718.02 154V720 M731.35 154V720 M738.01 154V720 M744.68 154V720 M751.34 154V720 M764.67 154V720 M771.34 154V720 M778.01 154V720 M784.67 154V720 M798.00 154V720 M804.67 154V720 M811.33 154V720 M818.00 154V720 M831.33 154V720 M837.99 154V720 M844.66 154V720 M851.32 154V720 M864.66 154V720 M871.32 154V720 M877.99 154V720 M884.65 154V720 M897.98 154V720 M904.65 154V720 M911.31 154V720 M917.98 154V720 M931.31 154V720 M937.97 154V720 M944.64 154V720 M951.31 154V720 M964.64 154V720 M971.30 154V720 M977.97 154V720 M984.63 154V720 M997.96 154V720 M1004.63 154V720 M1011.29 154V720 M1017.96 154V720 M1031.29 154V720 M1037.96 154V720 M1044.62 154V720 M167 158.35H1047 M167 165.33H1047 M167 179.27H1047 M167 186.25H1047 M167 193.22H1047 M167 200.20H1047 M167 214.14H1047 M167 221.12H1047 M167 228.09H1047 M167 235.07H1047 M167 249.01H1047 M167 255.99H1047 M167 262.96H1047 M167 269.94H1047 M167 283.88H1047 M167 290.86H1047 M167 297.83H1047 M167 304.81H1047 M167 318.75H1047 M167 325.73H1047 M167 332.70H1047 M167 339.68H1047 M167 353.62H1047 M167 360.60H1047 M167 367.57H1047 M167 374.55H1047 M167 388.49H1047 M167 395.47H1047 M167 402.44H1047 M167 409.42H1047 M167 423.36H1047 M167 430.34H1047 M167 437.31H1047 M167 444.29H1047 M167 458.23H1047 M167 465.21H1047 M167 472.18H1047 M167 479.16H1047 M167 493.10H1047 M167 500.08H1047 M167 507.05H1047 M167 514.03H1047 M167 527.97H1047 M167 534.95H1047 M167 541.92H1047 M167 548.90H1047 M167 562.84H1047 M167 569.82H1047 M167 576.79H1047 M167 583.77H1047 M167 597.71H1047 M167 604.69H1047 M167 611.66H1047 M167 618.64H1047 M167 632.58H1047 M167 639.56H1047 M167 646.53H1047 M167 653.51H1047 M167 667.45H1047 M167 674.43H1047 M167 681.40H1047 M167 688.38H1047 M167 702.32H1047 M167 709.30H1047 M167 716.27H1047" stroke="#272727" stroke-width="1.15" fill="none"/><path d="M191.45 154V720 M224.78 154V720 M258.10 154V720 M291.43 154V720 M324.76 154V720 M358.08 154V720 M391.41 154V720 M424.74 154V720 M458.07 154V720 M491.39 154V720 M524.72 154V720 M558.05 154V720 M591.37 154V720 M624.70 154V720 M658.03 154V720 M691.36 154V720 M724.68 154V720 M758.01 154V720 M791.34 154V720 M824.66 154V720 M857.99 154V720 M891.32 154V720 M924.64 154V720 M957.97 154V720 M991.30 154V720 M1024.62 154V720 M167 172.30H1047 M167 207.17H1047 M167 242.04H1047 M167 276.91H1047 M167 311.78H1047 M167 346.65H1047 M167 381.52H1047 M167 416.39H1047 M167 451.26H1047 M167 486.13H1047 M167 521.00H1047 M167 555.87H1047 M167 590.74H1047 M167 625.61H1047 M167 660.48H1047 M167 695.35H1047" stroke="#1d1d1d" stroke-width="1.2" fill="none"/></svg>
<div class="a" style="left:167px;top:154px;width:13.5px;height:14px;background:#3d3d3d"></div>
<svg width="1" height="1"><path d="M175.4 157.8 L171.8 161.2 L175.4 164.6" stroke="#8a94a0" stroke-width="1" fill="none"/></svg>
<div class="a" style="left:1033px;top:154px;width:14px;height:14px;background:#3d3d3d"></div>
<svg width="1" height="1"><path d="M1038.2 157.8 L1041.8 161.2 L1038.2 164.6" stroke="#8a94a0" stroke-width="1" fill="none"/></svg>
<svg width="1" height="1"><path d="M753.5 504.5 C893.5 504.5 411.20000000000005 352.4 551.2 352.4" stroke="#575757" stroke-width="2.8" fill="none"/></svg>
<svg width="1" height="1"><path d="M690 352.4 C830 352.4 367.5 512.5 507.5 512.5" stroke="#575757" stroke-width="2.8" fill="none"/></svg>
<div class="a" style="left:550.6px;top:278.3px;width:140.3px;height:105px;background:#626677;border:1.9px solid #3bbb97;border-radius:3.5px"></div>
<div class="a" style="left:550.6px;top:278.3px;width:140.3px;height:21.4px;background:#3bbb97;border-radius:3.5px 3.5px 0 0"></div>
<div class="a" style="left:552.5px;top:322.4px;width:136.5px;height:1px;background:#80848f"></div>
<div class="t" style="left:555.5px;top:282.49px;font-size:13px;color:#fff;font-weight:400;font-family:'Liberation Sans';transform:scale(1,1.128);">Switch</div>
<svg width="1" height="1"><rect x="671.8000000000001" y="281.8" width="14.2" height="14.6" rx="1.6" fill="none" stroke="#fff" stroke-width="1.2"/><path d="M674.2 293.8 L678.2 289.8 M675.4000000000001 289.59999999999997 H678.4000000000001 V292.59999999999997 M683.8000000000001 284.2 L679.8000000000001 288.2 M679.6 285.4 V288.4 H682.6" stroke="#fff" stroke-width="1.1" fill="none"/></svg>
<div class="t" style="left:555.6px;top:305.37px;font-size:11px;color:#fff;font-weight:400;font-family:'Liberation Sans';transform:scale(1,1.067);">Switch</div>
<svg width="1" height="1"><circle cx="680.4" cy="312.4" r="5.8" fill="#fff"/><circle cx="680.4" cy="309.79999999999995" r="1" fill="#626677"/><path d="M679.0 311.5 H681.1999999999999 V315.0 H681.9 V316.0 H678.8 V315.0 H679.6999999999999 V312.4 H679.0 Z" fill="#626677"/></svg>
<svg width="1" height="1"><circle cx="551.2" cy="352.4" r="5.4" fill="#fff" stroke="#383838" stroke-width="1.7"/></svg>
<svg width="1" height="1"><circle cx="690.3" cy="352.4" r="5.4" fill="#fff" stroke="#383838" stroke-width="1.7"/></svg>
<div class="t" style="left:559px;top:347.57px;font-size:9.33px;color:#fff;font-weight:400;font-family:'Liberation Serif';transform:scale(1,1.117);">in</div>
<div class="t" style="left:282.2px;top:347.57px;width:400px;text-align:right;transform-origin:100% 0;font-size:9.33px;color:#fff;font-weight:400;font-family:'Liberation Serif';transform:scale(1,1.117);">out</div>
<svg width="1" height="1"><circle cx="620.5" cy="354.5" r="16.8" fill="none" stroke="#fff" stroke-width="1.5"/><path d="M598 354.5 H612.3 L623.8 346.4 M628.4 354.5 H643.2" stroke="#fff" stroke-width="1.5" fill="none"/></svg>
<div class="a" style="left:507.5px;top:446.1px;width:246.25px;height:136.9px;background:#626677;border:1.9px solid #05ade3;border-radius:3.5px"></div>
<div class="a" style="left:507.5px;top:446.1px;width:246.25px;height:21.8px;background:#05ade3;border-radius:3.5px 3.5px 0 0"></div>
<div class="a" style="left:509.4px;top:490.4px;width:242.45px;height:1px;background:#80848f"></div>
<div class="t" style="left:512px;top:451.21px;font-size:13px;color:#fff;font-weight:400;font-family:'Liberation Sans';transform:scale(1,1.053);">RFSA_61B-1</div>
<svg width="1" height="1"><rect x="734.6" y="450.0" width="14.2" height="14.6" rx="1.6" fill="none" stroke="#fff" stroke-width="1.2"/><path d="M737 462.0 L741 458.0 M738.2 457.79999999999995 H741.2 V460.79999999999995 M746.6 452.4 L742.6 456.4 M742.4 453.59999999999997 V456.59999999999997 H745.4" stroke="#fff" stroke-width="1.1" fill="none"/></svg>
<div class="t" style="left:512px;top:473.84px;font-size:11.15px;color:#fff;font-weight:400;font-family:'Liberation Sans';transform:scale(1,1.002);">InelsRfPlugin</div>
<svg width="1" height="1"><circle cx="743.3" cy="480.4" r="5.8" fill="#fff"/><circle cx="743.3" cy="477.79999999999995" r="1" fill="#626677"/><path d="M741.9 479.5 H744.0999999999999 V483.0 H744.8 V484.0 H741.6999999999999 V483.0 H742.5999999999999 V480.4 H741.9 Z" fill="#626677"/></svg>
<svg width="1" height="1"><circle cx="507.8" cy="512.5" r="5.4" fill="#fff" stroke="#383838" stroke-width="1.7"/></svg>
<div class="t" style="left:515.8px;top:507.47px;font-size:9.33px;color:#fff;font-weight:400;font-family:'Liberation Serif';transform:scale(1,1.117);">On/Off</div>
<svg width="1" height="1"><circle cx="507.8" cy="528.3" r="5.4" fill="#fff" stroke="#383838" stroke-width="1.7"/></svg>
<div class="t" style="left:515.8px;top:523.27px;font-size:9.33px;color:#fff;font-weight:400;font-family:'Liberation Serif';transform:scale(1,1.117);">On/Off (Delayed)</div>
<svg width="1" height="1"><circle cx="507.8" cy="544.2" r="5.4" fill="#fff" stroke="#383838" stroke-width="1.7"/></svg>
<div class="t" style="left:515.8px;top:539.17px;font-size:9.33px;color:#fff;font-weight:400;font-family:'Liberation Serif';transform:scale(1,1.117);">Delayed On Time (s)</div>
<svg width="1" height="1"><circle cx="507.8" cy="559.6" r="5.4" fill="#fff" stroke="#383838" stroke-width="1.7"/></svg>
<div class="t" style="left:515.8px;top:554.57px;font-size:9.33px;color:#fff;font-weight:400;font-family:'Liberation Serif';transform:scale(1,1.117);">Delayed Off Time (s)</div>
<svg width="1" height="1"><circle cx="753.4" cy="504.5" r="5.4" fill="#fff" stroke="#383838" stroke-width="1.7"/></svg>
<div class="t" style="left:342.6px;top:499.47px;width:400px;text-align:right;transform-origin:100% 0;font-size:9.33px;color:#fff;font-weight:400;font-family:'Liberation Serif';transform:scale(1,1.117);">On/Off</div>
<svg width="1" height="1"><circle cx="753.4" cy="520.2" r="5.4" fill="#fff" stroke="#383838" stroke-width="1.7"/></svg>
<div class="t" style="left:342.6px;top:515.17px;width:400px;text-align:right;transform-origin:100% 0;font-size:9.33px;color:#fff;font-weight:400;font-family:'Liberation Serif';transform:scale(1,1.117);">Delayed On Time (s)</div>
<svg width="1" height="1"><circle cx="753.4" cy="535.8" r="5.4" fill="#fff" stroke="#383838" stroke-width="1.7"/></svg>
<div class="t" style="left:342.6px;top:530.77px;width:400px;text-align:right;transform-origin:100% 0;font-size:9.33px;color:#fff;font-weight:400;font-family:'Liberation Serif';transform:scale(1,1.117);">Delayed Off Time (s)</div>
<svg width="1" height="1"><circle cx="753.4" cy="551.5" r="5.4" fill="#fff" stroke="#383838" stroke-width="1.7"/></svg>
<div class="t" style="left:342.6px;top:546.47px;width:400px;text-align:right;transform-origin:100% 0;font-size:9.33px;color:#fff;font-weight:400;font-family:'Liberation Serif';transform:scale(1,1.117);">Rssi</div>
<svg width="1" height="1"><circle cx="753.4" cy="567.1" r="5.4" fill="#fff" stroke="#383838" stroke-width="1.7"/></svg>
<div class="t" style="left:342.6px;top:562.07px;width:400px;text-align:right;transform-origin:100% 0;font-size:9.33px;color:#fff;font-weight:400;font-family:'Liberation Serif';transform:scale(1,1.117);">state</div>
<svg width="1" height="1"><path d="M615.5 553.6 H645.5 Q652.6 553.6 652.6 546.2 Q652.6 538.6 645 538.4 Q645 523.4 630.6 523.4 Q619.4 523.4 616.6 534 Q608 534.6 608 543.6 Q608 553.6 615.5 553.6 Z" fill="none" stroke="#fff" stroke-width="1.5" stroke-linejoin="round"/><path d="M624 533.4 Q625.6 527.6 631.6 527.4" fill="none" stroke="#fff" stroke-width="1.5" stroke-linecap="round"/></svg>
<div class="a" style="left:1048px;top:120px;width:232px;height:600px;background:#222"></div>
<div class="a" style="left:1047px;top:120px;width:1px;height:600px;background:#151515"></div>
<div class="a" style="left:1067px;top:129.6px;width:192.7px;height:17.2px;background:#2d2d2d"></div>
<div class="a" style="left:1243.5px;top:129.6px;width:1px;height:17.2px;background:#262626"></div>
<svg width="1" height="1"><circle cx="1250.6" cy="137.6" r="2.8" fill="none" stroke="#b0b0b0" stroke-width="1.1"/><path d="M1252.6 139.6 L1254.6 141.6" stroke="#b0b0b0" stroke-width="1.4" stroke-linecap="round"/></svg>
<div class="t" style="left:1070.5px;top:134.23px;font-size:8.67px;color:#6a6a6a;font-weight:400;font-family:'Liberation Sans';transform:scale(1,1.031);">Search in devices</div>
<div class="a" style="left:1048px;top:157.2px;width:232px;height:1px;background:#2c2c2c"></div>
<div class="t" style="left:1057px;top:163.64px;font-size:8.67px;color:#fff;font-weight:700;font-family:'Liberation Sans';transform:scale(1,1.112);">BMS Nodes: 0</div>
<div class="t" style="left:1057px;top:180.98px;font-size:8.67px;color:#fff;font-weight:700;font-family:'Liberation Sans';transform:scale(1,1.079);">HVAC Nodes: 0</div>
<div class="t" style="left:1057px;top:197.61px;font-size:8.67px;color:#fff;font-weight:700;font-family:'Liberation Sans';transform:scale(1,1.144);">UI Objects: 1</div>
<svg width="1" height="1"><path d="M1206.4 171.6 V179.4 M1202.5 175.5 H1210.3" stroke="#8a8a8a" stroke-width="1.3"/></svg>
<div class="t" style="left:1212.2px;top:171.1px;font-size:8.67px;color:#8a8a8a;font-weight:400;font-family:'Liberation Sans';transform:scale(1,1.063);">Add new device</div>
<div class="a" style="left:1048px;top:213.3px;width:232px;height:1px;background:#2c2c2c"></div>
<div class="t" style="left:1103.7px;top:222.72px;font-size:8.67px;color:#d8d8d8;font-weight:400;font-family:'Liberation Sans';transform:scale(1,1.128);">Expand all</div>
<div class="t" style="left:1149px;top:222.72px;font-size:8.67px;color:#d8d8d8;font-weight:400;font-family:'Liberation Sans';transform:scale(1,1.128);">/</div>
<div class="t" style="left:1159px;top:222.72px;font-size:8.67px;color:#d8d8d8;font-weight:400;font-family:'Liberation Sans';transform:scale(1,1.128);">Collapse all</div>
<svg width="1" height="1"><path d="M1056.4 244.8 L1056.4 247.6 L1053.6 247.6 Z" fill="#777"/></svg>
<svg width="1" height="1"><path d="M1063.6 250.6 H1070.2 A2.1 2.1 0 0 0 1070.8 246.5 A3.5 3.5 0 0 0 1064.1 245.5 A2.55 2.55 0 0 0 1063.6 250.6 Z" fill="none" stroke="#cfcfcf" stroke-width="1"/></svg>
<div class="t" style="left:1075px;top:241.68px;font-size:9.33px;color:#dcdcdc;font-weight:400;font-family:'Liberation Sans';transform:scale(1,1.003);">Inels RFTC3 -</div>
<div class="a" style="left:1133.2px;top:242px;width:6.84px;height:7.2px;background:#707070"></div>
<div class="a" style="left:1139.74px;top:242px;width:6.84px;height:7.2px;background:#6e6e6e"></div>
<div class="a" style="left:1146.28px;top:242px;width:6.84px;height:7.2px;background:#787878"></div>
<div class="a" style="left:1152.82px;top:242px;width:6.84px;height:7.2px;background:#5a5a5a"></div>
<div class="a" style="left:1159.36px;top:242px;width:6.84px;height:7.2px;background:#6a6a6a"></div>
<div class="a" style="left:1165.9px;top:242px;width:6.84px;height:7.2px;background:#5e5e5e"></div>
<div class="a" style="left:1172.44px;top:242px;width:6.84px;height:7.2px;background:#7a7a7a"></div>
<div class="a" style="left:1178.98px;top:242px;width:6.84px;height:7.2px;background:#606060"></div>
<div class="a" style="left:1185.52px;top:242px;width:6.84px;height:7.2px;background:#808080"></div>
<div class="a" style="left:1192.06px;top:242px;width:6.84px;height:7.2px;background:#6a6a6a"></div>
<div class="a" style="left:1198.6px;top:242px;width:6.84px;height:7.2px;background:#888888"></div>
<div class="a" style="left:1205.14px;top:242px;width:6.84px;height:7.2px;background:#7e7e7e"></div>
<div class="a" style="left:1211.68px;top:242px;width:6.84px;height:7.2px;background:#747474"></div>
<div class="a" style="left:1218.22px;top:242px;width:6.84px;height:7.2px;background:#2a2a2a"></div>
<svg width="1" height="1"><circle cx="1075.9" cy="262.9" r="4.6" fill="#0aaee6"/></svg>
<div class="t" style="left:1085px;top:258.5px;font-size:9.33px;color:#dcdcdc;font-weight:400;font-family:'Liberation Sans';transform:scale(1,1.025);">RFSA_61B-1</div>
<svg width="1" height="1"><path d="M88 345.5 Q235 346 312.5 331 C314.5 330.4 315 327.8 316.5 326.6 C318 325.4 321 324.3 326 323.4 Q395 313 534 311.5" stroke="#ff0000" stroke-width="2.8" fill="none"/><path d="M533 307.1 L541.6 311.5 L533 316 Z" fill="#ff0000"/></svg>
<svg width="1" height="1"><path d="M1064 265.3 C980.3 265.2 912.7 315.9 912.7 369.9 C912.7 408.6 833.1 457.3 773.5 457.3" stroke="#ff0000" stroke-width="2.9" fill="none"/><path d="M773.6 452.6 L764.6 457.6 L773.8 462 Z" fill="#ff0000"/></svg>
<svg width="1" height="1"><path d="M73.6 170.2 H91.6 L83.2 121.8 L131.8 170.2 H219.2 Q228.2 170.2 228.2 179.2 V209.1 Q228.2 218.1 219.2 218.1 H73.6 Q64.6 218.1 64.6 209.1 V179.2 Q64.6 170.2 73.6 170.2 Z" fill="#fff" stroke="#000" stroke-width="2.7" stroke-linejoin="round"/></svg>
<div class="t" style="left:81.8px;top:174.81px;font-size:17px;color:#000;font-weight:400;font-family:'Liberation Sans';transform:scale(1,0.986);letter-spacing:0.5px">Push this button</div>
<div class="t" style="left:92.3px;top:197.63px;font-size:17px;color:#000;font-weight:400;font-family:'Liberation Sans';transform:scale(1,0.978);letter-spacing:1px">sometimes</div>
<svg width="1" height="1"><circle cx="194.6" cy="204.9" r="6.5" fill="none" stroke="#000" stroke-width="1.1"/><circle cx="192.3" cy="202.9" r="0.95" fill="#000"/><circle cx="196.9" cy="202.9" r="0.95" fill="#000"/><path d="M191.1 205.9 Q194.6 210.4 198.1 205.9" stroke="#000" stroke-width="1.1" fill="none"/></svg>
<svg width="1" height="1"><rect x="41.8" y="83.3" width="84.2" height="35.6" rx="7.5" fill="none" stroke="#ff0000" stroke-width="5.6"/></svg>
</body></html>
